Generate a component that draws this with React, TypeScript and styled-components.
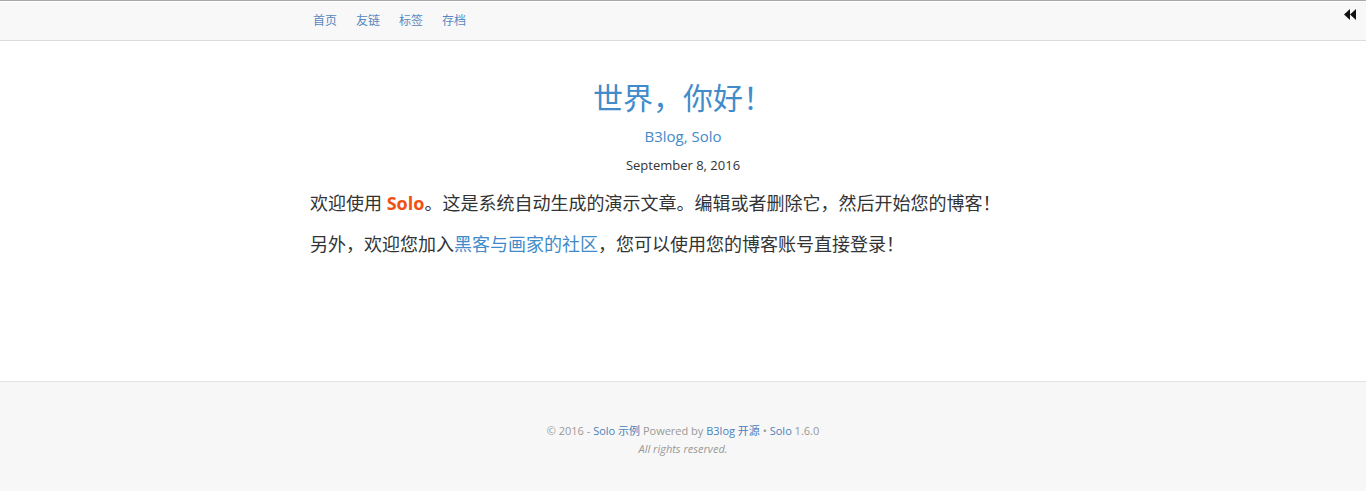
import React from "react";
import styled, { createGlobalStyle } from "styled-components";

const GlobalStyle = createGlobalStyle`
  html, body { margin: 0; padding: 0; background: #fff; }
  body {
    font-family: "Open Sans", "Noto Sans CJK SC", sans-serif;
    color: #333;
  }
  a { text-decoration: none; }
`;

const Header = styled.header`
  height: 39px;
  border-top: 1px solid #a9a9a9;
  border-bottom: 1px solid #dcdcdc;
  background: #f8f8f8;
  box-shadow: inset 0 1px 0 #fff;
`;

const Container = styled.div`
  width: 746px;
  margin: 0 auto;
`;

const Nav = styled.nav`
  display: flex;
  gap: 19px;
  padding-left: 3px;
  height: 39px;
  align-items: center;
`;

const NavLink = styled.a`
  font-size: 12px;
  line-height: 16px;
  color: #5688be;
  margin-top: 1px;
`;

const SideToggle = styled.button`
  position: absolute;
  top: 7px;
  right: 8px;
  width: 16px;
  height: 14px;
  padding: 0;
  border: 0;
  background: transparent;
  display: flex;
  align-items: center;
  justify-content: center;
`;

const Main = styled.main`
  min-height: 340px;
  box-sizing: border-box;
  padding-top: 37px;
`;

const Title = styled.h1`
  margin: 0;
  text-align: center;
  font-size: 30px;
  line-height: 40px;
  font-weight: normal;
  color: #428bca;
`;

const Tags = styled.div`
  margin-top: 6px;
  text-align: center;
  font-size: 15px;
  line-height: 24px;
  color: #428bca;
`;

const TagLink = styled.a`
  color: #428bca;
`;

const DateLine = styled.div`
  margin-top: 7px;
  text-align: center;
  font-size: 13px;
  line-height: 20px;
  color: #333;
`;

const Body = styled.div`
  margin-top: 14px;
`;

const Para = styled.p`
  margin: 0 0 13px;
  font-size: 18px;
  line-height: 28px;
  color: #333;
`;

const Brand = styled.strong`
  color: #f05011;
  font-weight: bold;
`;

const BodyLink = styled.a`
  color: #428bca;
`;

const Footer = styled.footer`
  border-top: 1px solid #e3e3e3;
  background: #f7f7f7;
  padding: 40px 0 33px;
  text-align: center;
  font-size: 11px;
  line-height: 18px;
  color: #999;
`;

const FooterLink = styled.a`
  color: #4a82bd;
`;

const Rights = styled.div`
  font-style: italic;
`;

export default function App() {
  return (
    <>
      <GlobalStyle />
      <Header>
        <Container>
          <Nav>
            <NavLink href="#">首页</NavLink>
            <NavLink href="#">友链</NavLink>
            <NavLink href="#">标签</NavLink>
            <NavLink href="#">存档</NavLink>
          </Nav>
        </Container>
      </Header>
      <SideToggle aria-label="collapse">
        <svg width="12" height="11" viewBox="0 0 12 11">
          <polygon points="0,5.5 6,0 6,11" fill="#111" />
          <polygon points="6,5.5 12,0 12,11" fill="#111" />
        </svg>
      </SideToggle>
      <Main>
        <Container>
          <Title>世界，你好！</Title>
          <Tags>
            <TagLink href="#">B3log</TagLink>, <TagLink href="#">Solo</TagLink>
          </Tags>
          <DateLine>September 8, 2016</DateLine>
          <Body>
            <Para>
              欢迎使用 <Brand>Solo</Brand>。这是系统自动生成的演示文章。编辑或者删除它，然后开始您的博客！
            </Para>
            <Para>
              另外，欢迎您加入<BodyLink href="#">黑客与画家的社区</BodyLink>，您可以使用您的博客账号直接登录！
            </Para>
          </Body>
        </Container>
      </Main>
      <Footer>
        <div>
          © 2016 - <FooterLink href="#">Solo 示例</FooterLink> Powered by{" "}
          <FooterLink href="#">B3log 开源</FooterLink> •{" "}
          <FooterLink href="#">Solo</FooterLink> 1.6.0
        </div>
        <Rights>All rights reserved.</Rights>
      </Footer>
    </>
  );
}
